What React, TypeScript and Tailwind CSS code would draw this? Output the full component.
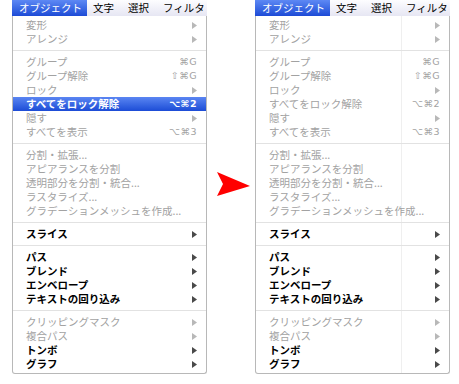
type Row =
  | "sep"
  | {
      label: string;
      enabled?: boolean;
      active?: boolean;
      shortcut?: string;
      sub?: boolean;
    };

const baseItems = (lockActive: boolean): Row[] => [
  { label: "変形", sub: true },
  { label: "アレンジ", sub: true },
  "sep",
  { label: "グループ", shortcut: "⌘G" },
  { label: "グループ解除", shortcut: "⇧⌘G" },
  { label: "ロック", sub: true },
  { label: "すべてをロック解除", shortcut: "⌥⌘2", enabled: lockActive, active: lockActive },
  { label: "隠す", sub: true },
  { label: "すべてを表示", shortcut: "⌥⌘3" },
  "sep",
  { label: "分割・拡張..." },
  { label: "アピアランスを分割" },
  { label: "透明部分を分割・統合..." },
  { label: "ラスタライズ..." },
  { label: "グラデーションメッシュを作成..." },
  "sep",
  { label: "スライス", sub: true, enabled: true },
  "sep",
  { label: "パス", sub: true, enabled: true },
  { label: "ブレンド", sub: true, enabled: true },
  { label: "エンベロープ", sub: true, enabled: true },
  { label: "テキストの回り込み", sub: true, enabled: true },
  "sep",
  { label: "クリッピングマスク", sub: true },
  { label: "複合パス", sub: true },
  { label: "トンボ", sub: true, enabled: true },
  { label: "グラフ", sub: true, enabled: true },
];

function Tri({ color }: { color: string }) {
  return (
    <svg width="5" height="7" viewBox="0 0 5 7" className="ml-1 shrink-0">
      <polygon points="0,0 5,3.5 0,7" fill={color} />
    </svg>
  );
}

function Menu({ lockActive, guide }: { lockActive: boolean; guide?: boolean }) {
  const items = baseItems(lockActive);
  return (
    <div className="w-[195px] shrink-0">
      {/* menu bar */}
      <div className="flex h-[16px] items-center whitespace-nowrap bg-linear-to-b from-[#fdfdff] to-[#e6e6f3] text-[10.5px] leading-[16px] text-black">
        <span className="h-full w-[75px] shrink-0 bg-linear-to-b from-[#5d88f4] to-[#1d4ad6] pl-[7px] text-white">
          オブジェクト
        </span>
        <span className="ml-[6px] w-[21px] shrink-0">文字</span>
        <span className="ml-[14px] w-[21px] shrink-0">選択</span>
        <span className="ml-[14px]">フィルタ</span>
      </div>

      {/* dropdown */}
      <div className="relative rounded-b-[3px] border-x border-b border-[#b8b8b8] bg-white py-[2px]">
        {guide && <div className="absolute bottom-0 left-[145px] top-0 w-px bg-[#efefef]" />}
        {items.map((it, i) => {
          if (it === "sep") {
            return (
              <div key={i} className="relative flex h-[9px] items-center">
                <div className="h-px w-full bg-[#e2e2e2]" />
              </div>
            );
          }
          const tone = it.active
            ? "bg-linear-to-b from-[#5a85f2] to-[#1c4bd6] font-bold text-white"
            : it.enabled
              ? "font-bold text-black"
              : "text-[#a2a2a2]";
          const triColor = it.active ? "#ffffff" : it.enabled ? "#4a4a4a" : "#b8b8b8";
          return (
            <div
              key={i}
              className={`relative flex h-[14px] items-center pl-[13px] pr-[9px] text-[10.5px] leading-[14px] ${tone}`}
            >
              <span className="flex-1 whitespace-nowrap">{it.label}</span>
              {it.shortcut && (
                <span className="font-['DejaVu_Sans',sans-serif] text-[9.5px] tracking-[0.5px]">
                  {it.shortcut}
                </span>
              )}
              {it.sub && <Tri color={triColor} />}
            </div>
          );
        })}
      </div>
    </div>
  );
}

export default function App() {
  return (
    <div className="flex h-[384px] w-[459px] overflow-hidden bg-white pl-[12px] font-['Noto_Sans_CJK_JP','Noto_Sans',sans-serif]">
      <Menu lockActive />
      <div className="w-[48px] shrink-0 pl-[10px] pt-[172px]">
        <svg width="33" height="24" viewBox="0 0 33 24">
          <polygon points="0,0 33,14 0,24 6,12" fill="#ff0000" />
        </svg>
      </div>
      <Menu lockActive={false} guide />
    </div>
  );
}
